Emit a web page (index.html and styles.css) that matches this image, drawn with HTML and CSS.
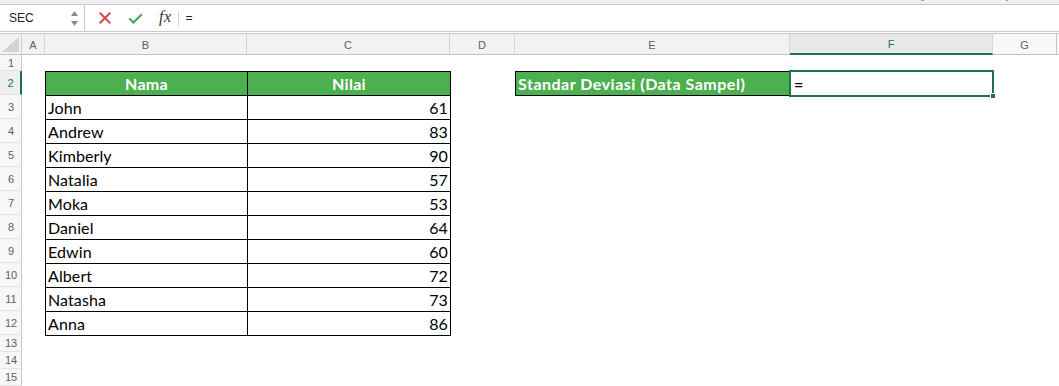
FILE: index.html
```html
<!DOCTYPE html>
<html>
<head>
<meta charset="utf-8">
<link rel="stylesheet" href="styles.css">
</head>
<body>
<div class="app">
  <div class="topstrip"><span class="mark m1"></span><span class="mark m2"></span></div>
  <div class="fbar">
    <div class="namebox">
      <span class="nbtext">SEC</span>
      <svg class="spin" width="9" height="17" viewBox="0 0 9 17"><path d="M4.5 1 L8 6 L1 6 Z" fill="#8a8a8a"/><path d="M1 11 L8 11 L4.5 16 Z" fill="#8a8a8a"/></svg>
    </div>
    <div class="fbtns">
      <svg class="ico-x" width="12" height="12" viewBox="0 0 12 12"><path d="M1.5 1.5 L10.5 10.5 M10.5 1.5 L1.5 10.5" stroke="#d9464a" stroke-width="2" stroke-linecap="square"/></svg>
      <svg class="ico-ok" width="15" height="11" viewBox="0 0 15 11"><path d="M1.3 5.6 L5.4 9.6 L13.8 1.2" fill="none" stroke="#3fae4f" stroke-width="2.1"/></svg>
      <span class="fx">fx</span>
    </div>
    <div class="fsep"></div>
    <div class="finput">=</div>
  </div>
  <div class="gap"></div>
  <div class="sheet">
    <div class="ch corner"><span class="tri"></span></div>
    <div class="ch">A</div>
    <div class="ch">B</div>
    <div class="ch">C</div>
    <div class="ch">D</div>
    <div class="ch">E</div>
    <div class="ch sel">F</div>
    <div class="ch light">G</div>
    <div class="ch light last"></div>

    <div class="rn">1</div>
    <div class="rn sel">2</div>
    <div class="rn">3</div>
    <div class="rn">4</div>
    <div class="rn">5</div>
    <div class="rn">6</div>
    <div class="rn">7</div>
    <div class="rn">8</div>
    <div class="rn">9</div>
    <div class="rn">10</div>
    <div class="rn">11</div>
    <div class="rn">12</div>
    <div class="rn">13</div>
    <div class="rn">14</div>
    <div class="rn">15</div>

    <div class="tbl">
      <div class="th">Nama</div><div class="th">Nilai</div>
      <div class="td">John</div><div class="td num">61</div>
      <div class="td">Andrew</div><div class="td num">83</div>
      <div class="td">Kimberly</div><div class="td num">90</div>
      <div class="td">Natalia</div><div class="td num">57</div>
      <div class="td">Moka</div><div class="td num">53</div>
      <div class="td">Daniel</div><div class="td num">64</div>
      <div class="td">Edwin</div><div class="td num">60</div>
      <div class="td">Albert</div><div class="td num">72</div>
      <div class="td">Natasha</div><div class="td num">73</div>
      <div class="td">Anna</div><div class="td num">86</div>
    </div>

    <div class="elabel">Standar Deviasi (Data Sampel)</div>
    <div class="fcell">=<span class="handle"></span></div>
  </div>
</div>
</body>
</html>
```
FILE: styles.css
```css
* { box-sizing: border-box; }
html, body { margin: 0; padding: 0; background: #fff; }
body { width: 1059px; height: 386px; overflow: hidden; font-family: "Liberation Sans", Arial, sans-serif; }
.app { width: 1059px; height: 386px; display: flex; flex-direction: column; }

.topstrip { height: 4px; background: #f0f0f0; position: relative; flex: none; }
.mark { position: absolute; top: 0; width: 3px; height: 1px; background: #9a9a9a; }
.m1 { left: 921px; }
.m2 { left: 1006px; width: 2px; }

.fbar { height: 28px; flex: none; display: flex; align-items: stretch; border-top: 1px solid #c9c9c9; border-bottom: 1px solid #c9c9c9; background: #fff; }
.namebox { width: 85px; display: flex; align-items: center; justify-content: space-between; padding: 0 5px 0 9px; border-right: 1px solid #c9c9c9; }
.nbtext { font-size: 12px; color: #222; }
.spin { display: block; margin-top: 1px; }
.fbtns { display: flex; align-items: center; padding-left: 14px; }
.ico-x { display: block; margin-right: 17px; }
.ico-ok { display: block; margin-right: 16px; }
.fx { font-family: "Liberation Serif", "DejaVu Serif", serif; font-style: italic; font-size: 16px; color: #333; letter-spacing: 0.5px; margin-top: -2px; }
.fsep { width: 1px; height: 15px; background: #d4d4d4; align-self: center; margin-left: 6px; }
.finput { display: flex; align-items: center; padding-left: 7px; font-size: 12px; color: #222; }
.gap { height: 1px; flex: none; background: #fff; }

.sheet {
  flex: none;
  display: grid;
  grid-template-columns: 22px 23px 202px 203px 65px 275px 203px 64px 2px;
  grid-template-rows: 22px 16px repeat(11, 24px) repeat(3, 17px);
  position: relative;
}
.ch { background: #f2f2f2; border-top: 1px solid #c6c6c6; border-bottom: 1px solid #c3c3c3; border-right: 1px solid #d6d6d6; font-size: 11px; color: #5f5f5f; display: flex; align-items: center; justify-content: center; padding-top: 1px; }
.ch.corner { position: relative; border-right: 1px solid #cfcfcf; }
.tri { position: absolute; right: 2px; bottom: 2px; width: 17px; height: 15px; background: linear-gradient(to top left, #d3d3d3 50%, transparent 51%); }
.ch.sel { background: #e9e9e9; border-bottom: 2px solid #217346; color: #217346; }
.ch.light { background: #f8f8f8; border-right-color: #c6c6c6; }
.ch.last { border-right: none; }

.rn { grid-column: 1; background: #f7f7f7; border-right: 1px solid #c8c8c8; border-bottom: 1px solid #e4e4e4; font-size: 11px; color: #5f5f5f; display: flex; align-items: center; justify-content: center; padding-left: 1px; }
.rn.sel { border-right: 2px solid #217346; color: #217346; background: #efefef; }

.tbl { grid-column: 3 / 5; grid-row: 3 / 14; align-self: start; justify-self: start; display: grid; grid-template-columns: 201px 202px; grid-auto-rows: 23px; gap: 1px; background: #000; border: 1px solid #000; font-family: Lato, "Noto Sans", sans-serif; font-size: 16px; color: #000; }
.th { background: #4caf50; color: #fff; font-weight: 700; display: flex; align-items: center; justify-content: center; letter-spacing: 0.3px; }
.td { background: #fff; display: flex; align-items: center; padding-left: 2px; letter-spacing: 0.1px; }
.td.num { justify-content: flex-end; padding-right: 2px; padding-left: 0; }

.elabel { grid-column: 6; grid-row: 3; width: 276px; height: 25px; align-self: start; background: #4caf50; border: 1px solid #000; color: #fff; font-family: Lato, "Noto Sans", sans-serif; font-weight: 700; font-size: 16px; letter-spacing: 0.5px; display: flex; align-items: center; padding-left: 2px; }
.fcell { grid-column: 7; grid-row: 3; margin: -1px -1px -2px -1px; border: 2px solid #217346; background: #fff; position: relative; font-family: Lato, "Noto Sans", sans-serif; font-size: 16px; font-weight: 700; color: #000; display: flex; align-items: center; padding-left: 3px; }
.handle { position: absolute; right: -4px; bottom: -4px; width: 6px; height: 6px; background: #217346; border: 1px solid #fff; }
```
